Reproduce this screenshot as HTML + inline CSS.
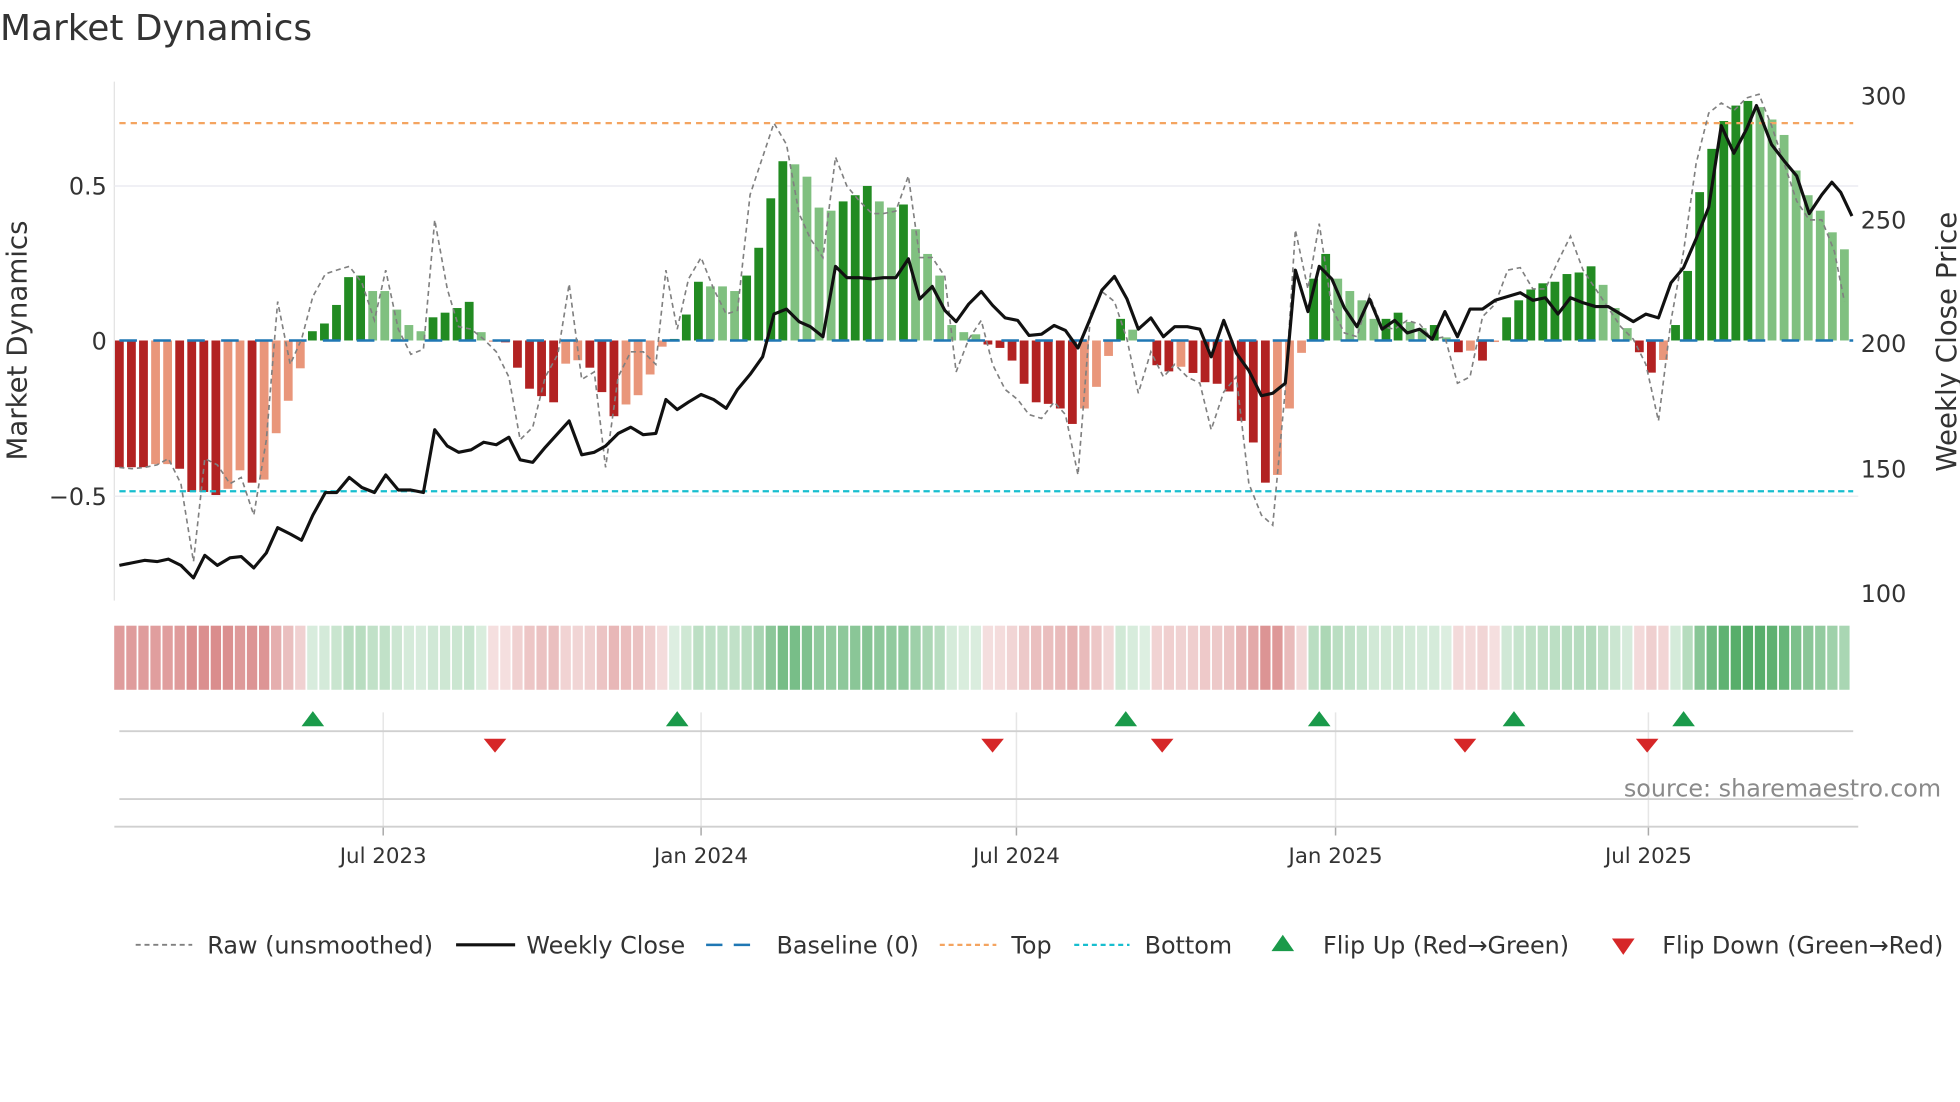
<!DOCTYPE html>
<html><head><meta charset="utf-8"><style>
html,body{margin:0;padding:0;background:#fff;width:1960px;height:1102px;overflow:hidden}
svg{display:block}
text{font-family:"DejaVu Sans","Liberation Sans",sans-serif;fill:#333}
</style></head><body>
<svg id="c" width="1960" height="1102" viewBox="0 0 1560 877.1" preserveAspectRatio="none" xmlns="http://www.w3.org/2000/svg">
<rect width="1560" height="877.1" fill="#fff"/>
<text x="0" y="32" font-size="28.6">Market Dynamics</text>
<line x1="91" y1="65" x2="91" y2="478" stroke="#e3e3e3" stroke-width="1"/>
<line x1="91" y1="148" x2="1479" y2="148" stroke="#ececf2" stroke-width="1.2"/>
<line x1="91" y1="395" x2="1479" y2="395" stroke="#ececf2" stroke-width="1.2"/>
<g id="bars"></g>
<g id="heat"></g>
<line x1="95" y1="271" x2="1475" y2="271" stroke="#1f77b4" stroke-width="2" stroke-dasharray="14,13"/>
<line x1="95" y1="98" x2="1475" y2="98" stroke="#f4a460" stroke-width="1.8" stroke-dasharray="5,4"/>
<line x1="95" y1="391" x2="1475" y2="391" stroke="#17becf" stroke-width="1.8" stroke-dasharray="5,3"/>
<polyline id="raw" fill="none" stroke="#808080" stroke-width="1.3" stroke-dasharray="4,3"/>
<polyline id="price" fill="none" stroke="#111" stroke-width="2.5" stroke-linejoin="round"/>
<text x="85" y="155" font-size="19" text-anchor="end">0.5</text>
<text x="85" y="278" font-size="19" text-anchor="end">0</text>
<text x="85" y="402" font-size="19" text-anchor="end">−0.5</text>
<text x="1481" y="83" font-size="19">300</text>
<text x="1481" y="182" font-size="19">250</text>
<text x="1481" y="280" font-size="19">200</text>
<text x="1481" y="380" font-size="19">150</text>
<text x="1481" y="479" font-size="19">100</text>
<text transform="translate(21,271) rotate(-90)" font-size="22" text-anchor="middle">Market Dynamics</text>
<text transform="translate(1557,272) rotate(-90)" font-size="22" text-anchor="middle">Weekly Close Price</text>
<g stroke="#e6e6e6" stroke-width="1.2">
<line x1="305" y1="567" x2="305" y2="658"/><line x1="558" y1="567" x2="558" y2="658"/><line x1="809" y1="567" x2="809" y2="658"/><line x1="1063" y1="567" x2="1063" y2="658"/><line x1="1312" y1="567" x2="1312" y2="658"/>
</g>
<g stroke="#aaa" stroke-width="1.2">
<line x1="305" y1="658" x2="305" y2="665"/><line x1="558" y1="658" x2="558" y2="665"/><line x1="809" y1="658" x2="809" y2="665"/><line x1="1063" y1="658" x2="1063" y2="665"/><line x1="1312" y1="658" x2="1312" y2="665"/>
</g>
<line x1="95" y1="582" x2="1475" y2="582" stroke="#d0d0d0" stroke-width="1.5"/>
<line x1="95" y1="636" x2="1475" y2="636" stroke="#d0d0d0" stroke-width="1.5"/>
<line x1="91" y1="658" x2="1479" y2="658" stroke="#d0d0d0" stroke-width="1.5"/>
<g id="flips"></g>
<text x="1545" y="634" font-size="19" text-anchor="end" style="fill:#8a8a8a">source: sharemaestro.com</text>
<g font-size="17" text-anchor="middle">
<text x="305" y="687">Jul 2023</text><text x="558" y="687">Jan 2024</text><text x="809" y="687">Jul 2024</text><text x="1063" y="687">Jan 2025</text><text x="1312" y="687">Jul 2025</text>
</g>
<g font-size="19">
<line x1="108" y1="752" x2="153" y2="752" stroke="#808080" stroke-width="1.5" stroke-dasharray="4,3"/>
<text x="165" y="759">Raw (unsmoothed)</text>
<line x1="363" y1="752" x2="410" y2="752" stroke="#111" stroke-width="2.5"/>
<text x="419" y="759">Weekly Close</text>
<line x1="562" y1="752" x2="606" y2="752" stroke="#1f77b4" stroke-width="2" stroke-dasharray="13,9"/>
<text x="618" y="759">Baseline (0)</text>
<line x1="748" y1="752" x2="793" y2="752" stroke="#f4a460" stroke-width="1.8" stroke-dasharray="4,3"/>
<text x="805" y="759">Top</text>
<line x1="855" y1="752" x2="899" y2="752" stroke="#17becf" stroke-width="1.8" stroke-dasharray="4,3"/>
<text x="911" y="759">Bottom</text>
<polygon points="1012,757 1030,757 1021,744" fill="#1a9a4a"/>
<text x="1053" y="759">Flip Up (Red→Green)</text>
<polygon points="1283,747 1301,747 1292,760" fill="#d62728"/>
<text x="1323" y="759">Flip Down (Green→Red)</text>
</g>
</svg>
<script>
var NS="http://www.w3.org/2000/svg";
var V=[["D",-.41],["D",-.41],["D",-.41],["L",-.40],["L",-.40],["D",-.415],["D",-.49],["D",-.49],["D",-.50],["L",-.48],["L",-.42],["D",-.46],["L",-.45],["L",-.30],["L",-.195],["L",-.09],
["G",.03],["G",.055],["G",.115],["G",.205],["G",.21],["g",.16],["g",.16],["g",.10],["g",.05],["g",.03],["G",.075],["G",.09],["G",.105],["G",.125],["g",.027],
["L",-.004],["D",-.006],["D",-.088],["D",-.156],["D",-.18],["D",-.2],["L",-.075],["L",-.064],["D",-.088],["D",-.167],["D",-.245],["L",-.207],["L",-.177],["L",-.11],["L",-.02],["G",.005],
["G",.084],["G",.19],["g",.175],["g",.175],["g",.16],["G",.21],["G",.30],["G",.46],["G",.58],["g",.57],["g",.53],["g",.43],["g",.42],["G",.45],["G",.47],["G",.50],["g",.45],["g",.43],["G",.44],["g",.36],["g",.28],["g",.21],["g",.05],["g",.027],["g",.02],
["D",-.013],["D",-.024],["D",-.065],["D",-.14],["D",-.2],["D",-.205],["D",-.22],["D",-.27],["L",-.22],["L",-.15],["L",-.05],["G",.07],["g",.035],["g",.003],
["D",-.08],["D",-.1],["L",-.085],["D",-.105],["D",-.135],["D",-.14],["D",-.165],["D",-.26],["D",-.33],["D",-.46],["L",-.435],["L",-.22],["L",-.04],
["G",.2],["G",.28],["g",.2],["g",.16],["g",.13],["g",.07],["G",.07],["G",.09],["g",.06],["g",.04],["G",.05],["g",.01],
["D",-.038],["L",-.033],["D",-.065],["L",-.005],["G",.075],["G",.13],["G",.165],["G",.185],["G",.19],["G",.215],["G",.22],["G",.24],["g",.18],["g",.105],["g",.04],
["D",-.038],["D",-.104],["L",-.063],["G",.05],["G",.225],["G",.48],["G",.62],["G",.71],["G",.76],["G",.775],["g",.755],["g",.715],["g",.665],["g",.55],["g",.47],["g",.42],["g",.35],["g",.295]];
var col={D:"#b22222",L:"#e9967a",G:"#228b22",g:"#80c080"};
var step=(1468-95)/(V.length-1),bw=7;
var bars=document.getElementById("bars"),heat=document.getElementById("heat");
function mix(c,a){var r=parseInt(c.substr(1,2),16),g=parseInt(c.substr(3,2),16),b=parseInt(c.substr(5,2),16);
return "rgb("+Math.round(255-(255-r)*a)+","+Math.round(255-(255-g)*a)+","+Math.round(255-(255-b)*a)+")";}
V.forEach(function(d,i){var x=95+i*step,v=d[1],h=Math.abs(v)*246;
var r=document.createElementNS(NS,"rect");r.setAttribute("x",x-bw/2);r.setAttribute("width",bw);
r.setAttribute("y",v>=0?271-h:271);r.setAttribute("height",Math.max(h,0.5));r.setAttribute("fill",col[d[0]]);bars.appendChild(r);
var a=Math.min(0.16+0.85*Math.abs(v),0.88);
var hc=document.createElementNS(NS,"rect");hc.setAttribute("x",x-step/2+0.7);hc.setAttribute("width",step-1.4);
hc.setAttribute("y",498);hc.setAttribute("height",51);hc.setAttribute("fill",mix(v>=0?"#2e9a46":"#c03c3c",a));heat.appendChild(hc);});
var raw=[95,372,105,373,115,372,125,370,134,365,144,385,154,447,163,365,173,370,183,385,192,380,202,410,212,350,221,240,231,290,240,270,249,236,259,218,268,215,278,212,288,225,298,255,307,215,317,262,327,282,337,278,346,175,356,230,365,260,375,262,385,270,395,280,405,300,414,350,424,340,434,300,444,282,453,226,463,302,473,296,482,372,492,300,502,280,512,280,522,290,530,215,539,262,548,222,558,205,568,230,578,250,587,247,597,155,607,125,616,98,626,115,636,170,645,190,655,205,665,125,674,148,684,160,694,170,703,170,713,168,723,140,732,205,742,205,752,220,761,296,771,270,781,255,790,290,800,310,810,318,819,330,829,333,839,320,848,330,858,378,868,250,877,232,887,240,897,270,906,313,916,280,926,300,935,290,945,300,955,305,964,342,974,312,984,300,994,385,1004,410,1013,418,1023,310,1031,183,1041,230,1050,178,1060,245,1070,265,1080,268,1090,235,1100,260,1110,262,1120,255,1130,258,1140,270,1150,268,1160,305,1170,300,1180,252,1190,242,1200,215,1210,213,1220,230,1230,230,1240,208,1250,188,1260,215,1270,230,1280,245,1290,260,1300,270,1310,290,1320,335,1330,255,1340,200,1350,130,1360,90,1370,82,1380,88,1390,78,1400,75,1410,100,1420,130,1430,160,1440,175,1450,175,1460,200,1468,240];
var pr=[95,450,105,448,115,446,125,447,134,445,144,450,154,460,163,442,173,450,183,444,192,443,202,452,212,440,221,420,231,425,240,430,249,410,259,392,268,392,278,380,288,388,298,392,307,378,317,390,327,390,337,392,346,342,356,355,365,360,375,358,385,352,395,354,405,348,414,366,424,368,434,356,444,345,453,335,463,362,473,360,482,355,492,345,502,340,512,346,522,345,530,318,539,326,548,320,558,314,568,318,578,325,587,310,597,298,607,284,616,250,626,246,636,256,645,260,655,268,665,212,674,221,684,221,694,222,703,221,713,221,723,206,732,238,742,228,752,247,761,256,771,242,781,232,790,243,800,253,810,255,819,267,829,266,839,259,848,263,858,277,868,253,877,231,887,220,897,238,906,262,916,253,926,268,935,260,945,260,955,262,964,284,974,255,984,281,994,295,1004,315,1013,313,1023,305,1031,215,1041,248,1050,212,1060,222,1070,245,1080,260,1090,238,1100,262,1110,255,1120,265,1130,262,1140,270,1150,248,1160,268,1170,246,1180,246,1190,239,1200,236,1210,233,1220,239,1230,237,1240,250,1250,237,1260,241,1270,244,1280,244,1290,250,1300,256,1310,250,1320,253,1330,225,1340,213,1350,190,1360,165,1370,100,1380,122,1390,103,1398,84,1410,115,1420,128,1430,140,1440,170,1450,155,1458,145,1465,153,1474,172];
function pts(a){var s=[];for(var i=0;i<a.length;i+=2)s.push(a[i]+","+a[i+1]);return s.join(" ");}
document.getElementById("raw").setAttribute("points",pts(raw));
document.getElementById("price").setAttribute("points",pts(pr));
var fl=document.getElementById("flips");
[249,539,896,1050,1205,1340].forEach(function(x){var p=document.createElementNS(NS,"polygon");p.setAttribute("points",(x-9)+",578 "+(x+9)+",578 "+x+",566");p.setAttribute("fill","#1a9a4a");fl.appendChild(p);});
[394,790,925,1166,1311].forEach(function(x){var p=document.createElementNS(NS,"polygon");p.setAttribute("points",(x-9)+",588 "+(x+9)+",588 "+x+",599");p.setAttribute("fill","#d62728");fl.appendChild(p);});
</script>
</body></html>
